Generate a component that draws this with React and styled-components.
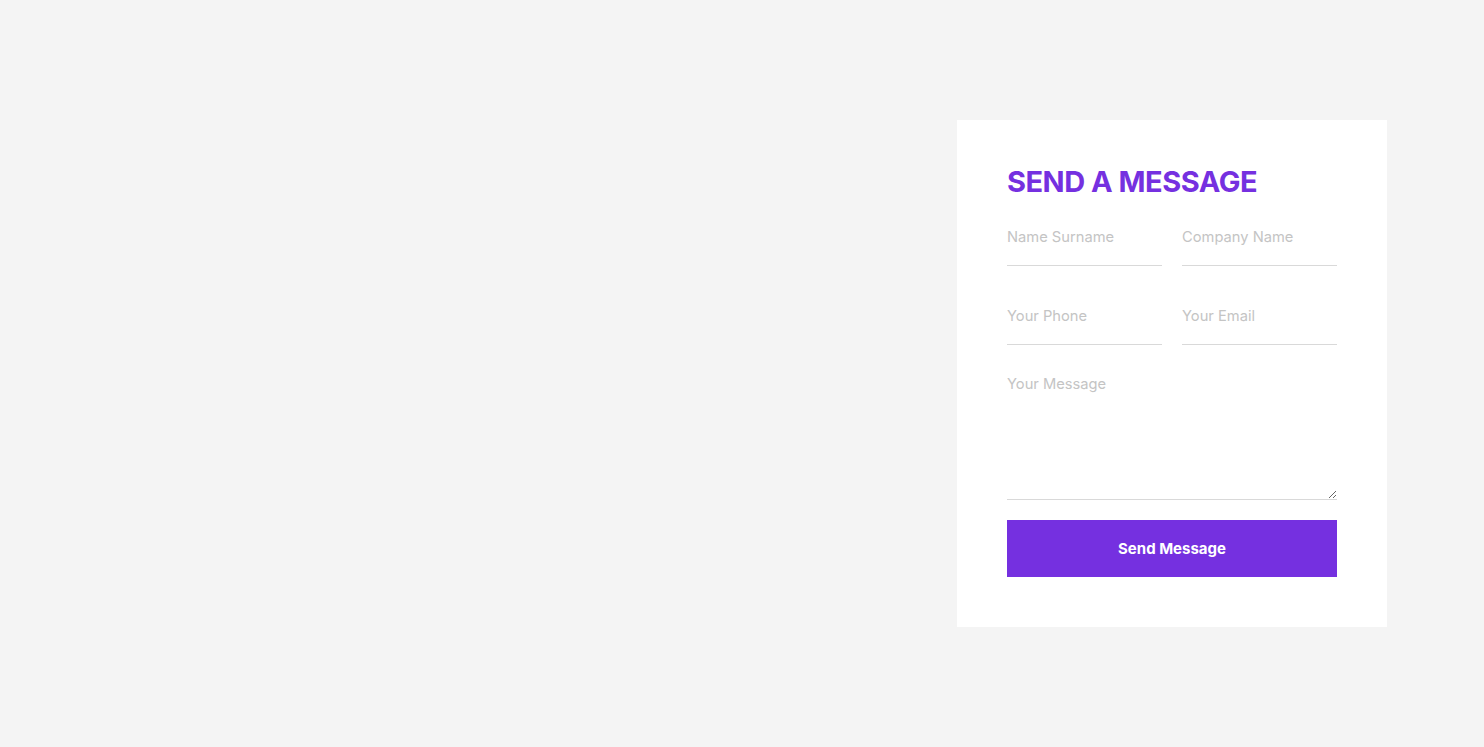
import React from 'react'
import styled, { createGlobalStyle } from 'styled-components'

const GlobalStyle = createGlobalStyle`
  * { box-sizing: border-box; }
  body {
    margin: 0;
    background: #f4f4f4;
    font-family: Inter, "Noto Sans", sans-serif;
  }
`

const Page = styled.section`
  padding: 120px 0;
`

const Container = styled.div`
  width: 1290px;
  margin: 0 auto;
  display: grid;
  grid-template-columns: 2fr 1fr;
`

const Card = styled.div`
  grid-column: 2;
  background: #fff;
  padding: 47px 50px 50px;
`

const Title = styled.h2`
  margin: 0 0 23px;
  font-size: 29px;
  line-height: 30px;
  font-weight: 700;
  letter-spacing: -0.5px;
  color: #7530e0;
  text-transform: uppercase;
`

const Form = styled.form`
  display: grid;
  grid-template-columns: 1fr 1fr;
  column-gap: 20px;
  row-gap: 33px;
`

const Input = styled.input`
  display: block;
  width: 100%;
  height: 46px;
  padding: 2px 0 14px;
  border: 0;
  border-bottom: 1px solid #d9d9d9;
  outline: none;
  background: transparent;
  font-family: inherit;
  font-size: 14.7px;
  color: #333;
  &::placeholder { color: #c4c4c4; }
`

const TextArea = styled.textarea`
  grid-column: 1 / -1;
  display: block;
  width: 100%;
  height: 125px;
  margin-top: -3px;
  padding: 0;
  border: 0;
  border-bottom: 1px solid #d9d9d9;
  outline: none;
  background: transparent;
  font-family: inherit;
  font-size: 14.7px;
  line-height: 18px;
  color: #333;
  resize: vertical;
  &::placeholder { color: #c4c4c4; }
`

const Button = styled.button`
  grid-column: 1 / -1;
  margin-top: -13px;
  height: 57px;
  border: 0;
  background: #7530e0;
  color: #fff;
  font-family: inherit;
  font-size: 15px;
  font-weight: 700;
  cursor: pointer;
`

export default function App() {
  return (
    <>
      <GlobalStyle />
      <Page>
        <Container>
          <Card>
            <Title>Send a Message</Title>
            <Form onSubmit={e => e.preventDefault()}>
              <Input type="text" placeholder="Name Surname" />
              <Input type="text" placeholder="Company Name" />
              <Input type="tel" placeholder="Your Phone" />
              <Input type="email" placeholder="Your Email" />
              <TextArea placeholder="Your Message" />
              <Button type="submit">Send Message</Button>
            </Form>
          </Card>
        </Container>
      </Page>
    </>
  )
}
